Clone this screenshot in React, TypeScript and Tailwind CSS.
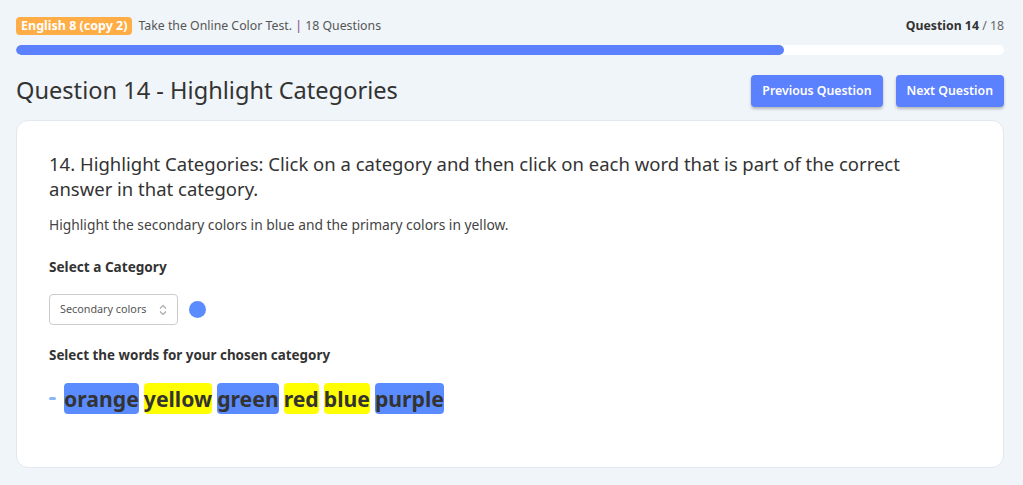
import React from "react";

const words: { w: string; c: string }[] = [
  { w: "orange", c: "blue" },
  { w: "yellow", c: "yellow" },
  { w: "green", c: "blue" },
  { w: "red", c: "yellow" },
  { w: "blue", c: "yellow" },
  { w: "purple", c: "blue" },
];

export default function App() {
  return (
    <div
      className="w-[1023px] h-[485px] bg-[#f0f5f9] overflow-hidden pl-4 pr-[19px] pt-[17px]"
      style={{ fontFamily: "'Noto Sans', sans-serif" }}
    >
      <div className="flex items-start justify-between h-[28px]">
        <div className="flex items-center gap-[6px]">
          <span className="bg-[#ffad46] text-white font-bold text-[12.5px] leading-[18px] px-[5px] rounded-[4px]">
            English 8 (copy 2)
          </span>
          <span className="text-[12.3px] text-[#555]">
            Take the Online Color Test. <span className="text-[#8a3c8a]">|</span> 18 Questions
          </span>
        </div>
        <div className="text-[12.3px] text-[#333]">
          <span className="font-bold">Question 14</span>
          <span className="text-[#666]"> / 18</span>
        </div>
      </div>
      <div className="h-[10px] bg-white rounded-full overflow-hidden">
        <div className="h-full bg-[#5b81fe] rounded-full" style={{ width: `${(14 / 18) * 100}%` }} />
      </div>
      <div className="flex items-center justify-between mt-[20px] h-[32px]">
        <h1 className="text-[23.6px] text-[#333] font-normal">Question 14 - Highlight Categories</h1>
        <div className="flex gap-[13px]">
          <button className="h-[32px] px-[11px] bg-[#5b81fe] text-white font-semibold text-[12.3px] rounded-[4px] shadow-[0_2px_3px_rgba(0,0,0,0.25)]">
            Previous Question
          </button>
          <button className="h-[32px] px-[11px] bg-[#5b81fe] text-white font-semibold text-[12.3px] rounded-[4px] shadow-[0_2px_3px_rgba(0,0,0,0.25)]">
            Next Question
          </button>
        </div>
      </div>
      <div className="mt-[13px] h-[348px] bg-white rounded-[12px] border border-[#e3e8ee] px-[32px] pt-[30px]">
        <p className="text-[18.5px] leading-[25px] text-[#333] pr-[8px]">
          14. Highlight Categories: Click on a category and then click on each word that is part of the correct
          answer in that category.
        </p>
        <p className="mt-[14px] text-[13.8px] text-[#444]">
          Highlight the secondary colors in blue and the primary colors in yellow.
        </p>
        <p className="mt-[21px] text-[13.6px] font-bold text-[#333]">Select a Category</p>
        <div className="mt-[17px] flex items-center gap-[11px]">
          <div className="w-[129px] h-[31px] border border-[#ccc] rounded-[4px] flex items-center justify-between pl-[10px] pr-[10px] text-[10.8px] text-[#555]">
            <span>Secondary colors</span>
            <svg width="8" height="12" viewBox="0 0 8 12" fill="none" stroke="#aaa" strokeWidth="1.2">
              <path d="M1 4.5 L4 1.5 L7 4.5" />
              <path d="M1 7.5 L4 10.5 L7 7.5" />
            </svg>
          </div>
          <div className="w-[17px] h-[17px] rounded-full bg-[#5b8cff]" />
        </div>
        <p className="mt-[20px] text-[13.4px] font-bold text-[#333]">Select the words for your chosen category</p>
        <div className="mt-[18px] flex items-center gap-[5px]">
          <span className="w-[7px] h-[3px] rounded-full bg-[#8db5f5] mr-[3px]" />
          {words.map((x) => (
            <span
              key={x.w}
              className={
                "h-[31px] flex items-center px-0 rounded-[4px] text-[21.2px] font-bold text-[#333] " +
                (x.c === "blue" ? "bg-[#5b8cff]" : "bg-[#ffff00]")
              }
            >
              {x.w}
            </span>
          ))}
        </div>
      </div>
    </div>
  );
}
